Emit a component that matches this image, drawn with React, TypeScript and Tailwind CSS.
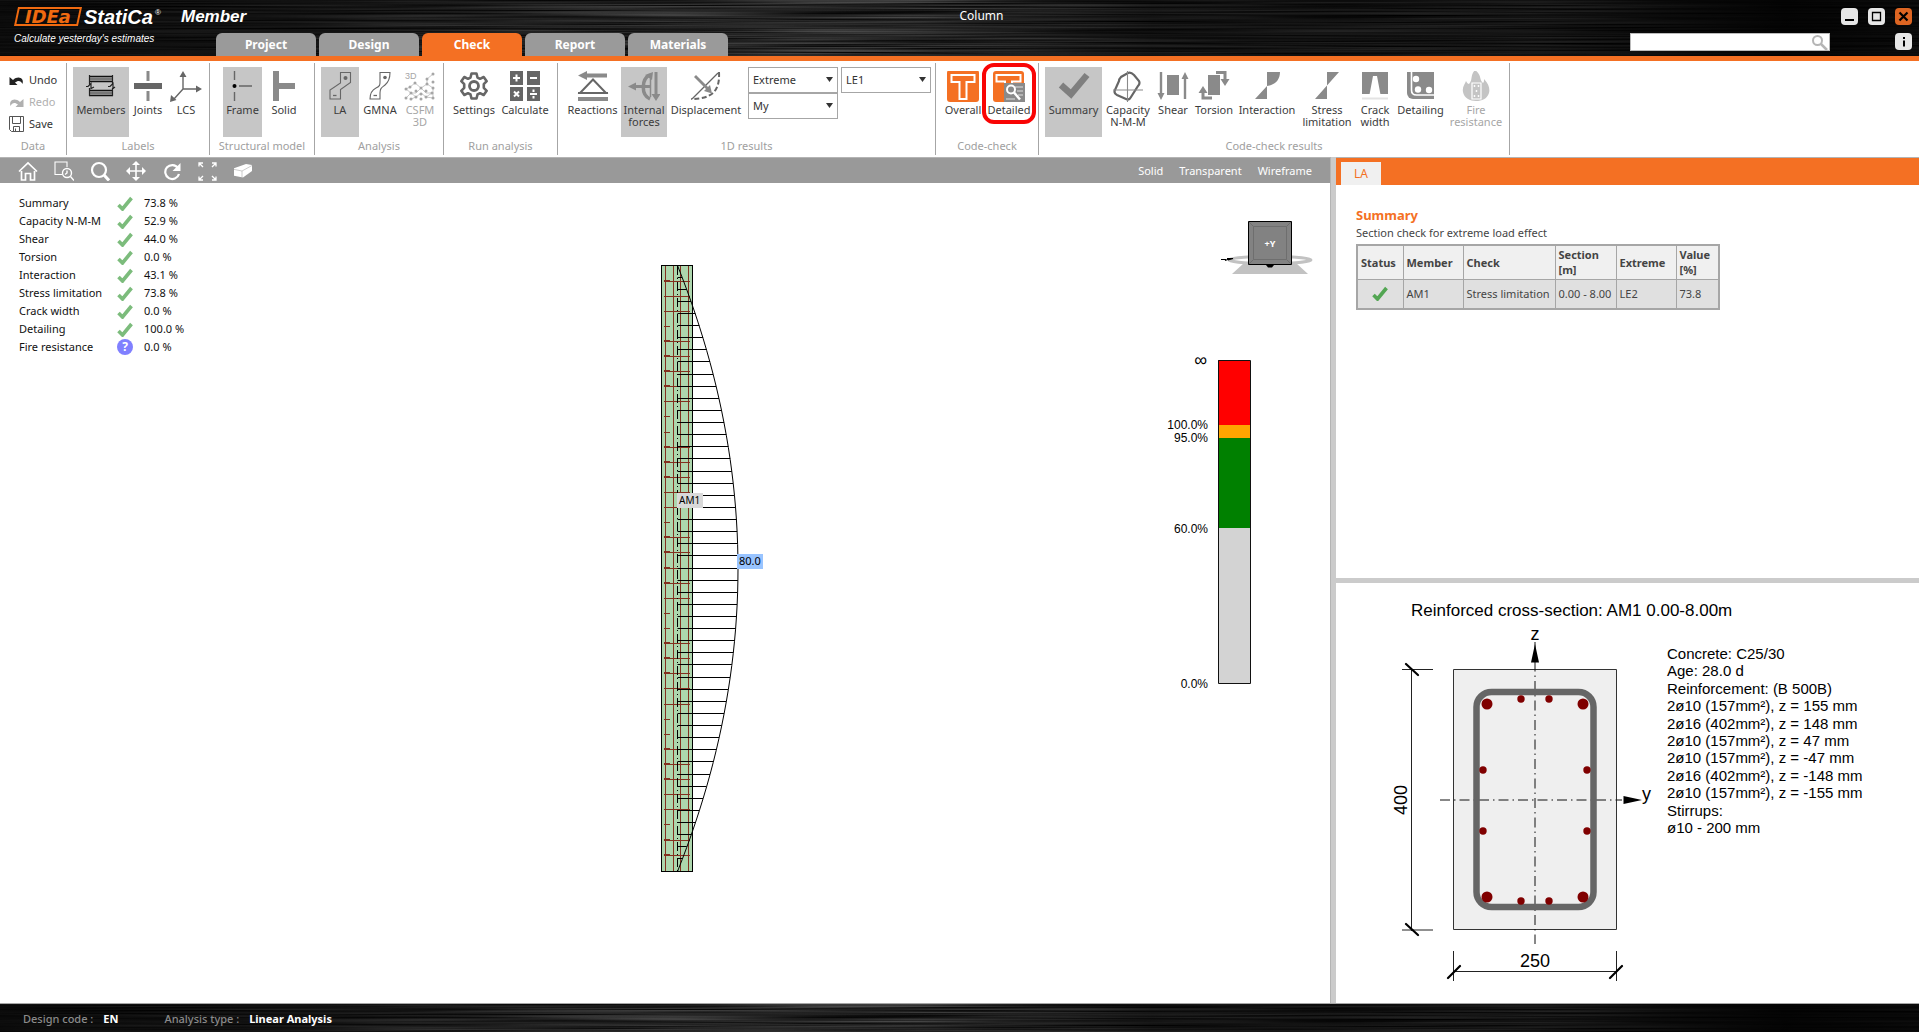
import { useId, useState, type ReactNode } from "react";

const G = "#8a8a8a";
const D = "#666666";

function BrushedMetal() {
  const id = useId();
  return (
    <svg className="absolute inset-0 h-full w-full" aria-hidden="true" preserveAspectRatio="none">
      <defs>
        <filter id={id + "f"} x="0" y="0" width="100%" height="100%" colorInterpolationFilters="sRGB">
          <feTurbulence type="fractalNoise" baseFrequency="0.004 0.6" numOctaves="2" seed="4" />
          <feColorMatrix values="0.5 0 0 0 -0.08  0.5 0 0 0 -0.08  0.5 0 0 0 -0.08  0 0 0 0 1" />
        </filter>
        <linearGradient id={id + "g"}>
          <stop offset="0" stopColor="#000" stopOpacity="0.75" />
          <stop offset="0.15" stopColor="#000" stopOpacity="0.6" />
          <stop offset="0.35" stopColor="#000" stopOpacity="0.15" />
          <stop offset="0.48" stopColor="#000" stopOpacity="0.15" />
          <stop offset="0.6" stopColor="#000" stopOpacity="0.6" />
          <stop offset="0.8" stopColor="#000" stopOpacity="0.55" />
          <stop offset="0.93" stopColor="#000" stopOpacity="0.92" />
          <stop offset="1" stopColor="#000" stopOpacity="0.8" />
        </linearGradient>
      </defs>
      <rect width="100%" height="100%" filter={`url(#${id}f)`} />
      <rect width="100%" height="100%" fill={`url(#${id}g)`} />
    </svg>
  );
}

function Ico({ children, w = 32 }: { children: ReactNode; w?: number }) {
  return (
    <svg width={w} height={33} viewBox={`0 0 ${w} 33`} fill="none" aria-hidden="true" className="shrink-0">
      {children}
    </svg>
  );
}

const icons = {
  members: (
    <Ico>
      <path d="M4 5.5h24M4 10.5h24M4 19.5h24M4 24.5h24" stroke="#111" strokeWidth="1.6" />
      <path d="M4 8h24M4 22h24" stroke="#777" strokeWidth="3" />
      <path d="M4.500 4v10M4.500 17v8M27.500 4v10M27.500 17v8M1 15.500h2l3-3v5l3-1.500M23 15.500h2l3-3v5l2-1.500" stroke="#222" strokeWidth="1.2" />
    </Ico>
  ),
  joints: (
    <Ico>
      <path d="M2 15h28" stroke={D} strokeWidth="6" />
      <path d="M16 0v10M16 20v10" stroke={G} strokeWidth="3" />
    </Ico>
  ),
  lcs: (
    <Ico>
      <path d="M13 4v14h14M13 18L4 28" stroke={D} strokeWidth="1.4" />
      <path d="M13 0l3.500 6h-7zM32 18l-6 3.500v-7zM0 31l1-7 5.500 5z" fill={D} />
    </Ico>
  ),
  frame: (
    <Ico>
      <path d="M7.500 0v9M7.500 21v9M12 15h13" stroke={D} strokeWidth="1.4" />
      <circle cx="7.500" cy="15" r="2" fill="#000" />
    </Ico>
  ),
  solid: (
    <Ico>
      <path d="M8 0v30" stroke={G} strokeWidth="6" />
      <path d="M9 15h18" stroke={G} strokeWidth="6" />
    </Ico>
  ),
  la: (
    <Ico>
      <path d="M16.500 1.500h10v10l-10 7v9.500h-10.500v-9l10.500-7z" stroke={D} strokeWidth="1.1" />
      <circle cx="21.500" cy="7" r="2" fill={D} />
      <path d="M9 24.500h3.500" stroke={D} strokeWidth="1.300" />
    </Ico>
  ),
  gmna: (
    <Ico>
      <path d="M16 1.500h10c0 7-2 10-5 12.500s-5 3-5 8v6h-10c0-6 2-9 6-11s4-3 4-6z" stroke={D} strokeWidth="1.1" />
      <circle cx="21" cy="6.500" r="1.800" fill={D} />
      <path d="M9.500 24.500h3.500" stroke={D} strokeWidth="1.300" />
    </Ico>
  ),
  csfm: (
    <Ico>
      <path
        d="M29 3l-6 5v5M11 12l-5 4-4 2 5 4-5 5M11 12l6 5 6-4 6 4M17 17l-5 5-5 0M17 17l5 5 6-0M7 22l5 4-5 2M17 22l5 4 6-4M17 22l-5 4M29 17v10l-7-1"
        stroke="#c9c9c9" strokeWidth="1"
      />
      <g fill="#a6a6a6">
        {[[29, 3], [23, 8], [29, 11], [11, 12], [23, 13], [6, 16], [17, 17], [29, 17], [2, 18], [12, 20], [22, 20], [7, 22], [17, 23], [28, 22], [2, 27], [12, 26], [22, 26], [7, 28], [17, 28], [29, 27]].map(([x, y]) => (
          <circle key={`${x}-${y}`} cx={x} cy={y} r="1.500" />
        ))}
      </g>
      <text x="1" y="8" fontSize="9" fill="#a6a6a6" className="font-['Liberation_Sans']">3D</text>
    </Ico>
  ),
  settings: (
    <Ico>
      <path
        d="M13.500 2.500h5l1 4 2.500 1.300 3.700-1.800 3 4.200-2.900 3v3.600l2.900 3-3 4.200-3.700-1.800-2.500 1.300-1 4h-5l-1-4-2.500-1.300-3.700 1.800-3-4.200 2.900-3v-3.600l-2.900-3 3-4.200 3.700 1.800 2.500-1.300z"
        stroke={D} strokeWidth="2.600" strokeLinejoin="round"
      />
      <circle cx="16" cy="15" r="4.500" stroke={D} strokeWidth="2.800" />
    </Ico>
  ),
  calculate: (
    <Ico>
      <path d="M1 0h13v14H1zM18 0h13v14H18zM1 16h13v14H1zM18 16h13v14H18z" fill={D} />
      <path d="M4 7h7M7.500 3.500v7M21 7h7M5 20.500l5 5M10 20.500l-5 5M21 23h7M24.500 18.500v2.500M24.500 25v2.500" stroke="#fff" strokeWidth="2" />
    </Ico>
  ),
  reactions: (
    <Ico>
      <path d="M1 4.500l9-4.500v2.500h20v4h-20v2.500zM1 26h30v4H1z" fill={G} />
      <path d="M16 8.500l13 13.500H3zM1 22h30" stroke={D} strokeWidth="2" />
    </Ico>
  ),
  internal: (
    <Ico>
      <path d="M5 15.500h17M28 1v24" stroke={G} strokeWidth="3" />
      <path d="M0 15.500l8-4v8zM28 30l-4.500-7h9zM25 1l-1 8-7-5z" fill={G} />
      <path d="M22 4c-9 4-9 20 0 24" stroke={G} strokeWidth="3.500" />
      <path d="M22.500 6v20" stroke={G} strokeWidth="1.500" />
    </Ico>
  ),
  displacement: (
    <Ico>
      <path d="M28 2L2 28" stroke={D} strokeWidth="1.300" />
      <path d="M29 1c1 18-6 27-28 27" stroke={D} strokeWidth="2" strokeDasharray="5 2.500" />
      <path d="M5 5l14 14" stroke={G} strokeWidth="2.800" />
      <path d="M22 22.500l-8-2.500 6-6z" fill={G} />
    </Ico>
  ),
  overall: (
    <Ico>
      <rect y="-1" width="32" height="32" rx="3" fill="#f47023" />
      <path d="M4.500 4h23v7h-8v17h-7v-17h-8z" stroke="#fff" strokeWidth="2" />
    </Ico>
  ),
  detailed: (
    <Ico>
      <rect width="31" height="31" rx="3" fill="#f47023" />
      <path d="M3.500 4h24v6.500h-8.500v8h-7v-8h-8.500z" stroke="#fff" strokeWidth="2" />
      <path d="M11 12h21v19H11z" fill={G} />
      <path d="M22 16h8M24 20h6M25 24h5M13 28h9" stroke="#ddd" strokeWidth="1.200" />
      <circle cx="18" cy="18.500" r="4" stroke="#fff" strokeWidth="2" />
      <path d="M21 21.500l6 7" stroke="#fff" strokeWidth="2.500" />
    </Ico>
  ),
  summary: (
    <Ico>
      <path d="M3 14l10 9L29 4" stroke="#7f7f7f" strokeWidth="6.500" />
    </Ico>
  ),
  capacity: (
    <Ico>
      <path d="M16 2c2-1 4 0 6 2l5 6c1 2 0 4-1 5l-7 11c-1 2-3 3-5 2l-9-4c-2-1-3-3-2-5L7 10c0-2 1-3 2-4z" stroke={D} strokeWidth="2.200" />
      <path d="M15.500 0v31M1 19h30" stroke={G} strokeWidth="1.100" />
    </Ico>
  ),
  shear: (
    <Ico>
      <path d="M10 4h12v20H10z" fill={G} />
      <path d="M4 1v23M28 6v22" stroke={G} strokeWidth="2.400" />
      <path d="M4 29l-3.500-7h7zM28 1l3.500 7h-7z" fill={G} />
    </Ico>
  ),
  torsion: (
    <Ico>
      <path d="M10 4h12v20H10z" fill={G} />
      <path d="M18 1.500h9v8M14 27H5v-5" stroke={G} strokeWidth="3" />
      <path d="M22.500 3v5M9.500 20v5" stroke="#fff" strokeWidth="1" />
      <path d="M27 15l-4.500-7h9zM5 15l4.500 7H.5z" fill={G} />
    </Ico>
  ),
  interaction: (
    <Ico>
      <path d="M4 28L16 15V1h13c0 8-5 13-13 14v13z" fill={G} />
    </Ico>
  ),
  stress: (
    <Ico>
      <path d="M4 28L16 14.500V1h12L16 14.500V28z" fill={G} />
    </Ico>
  ),
  crack: (
    <Ico>
      <path d="M3 1h26v22H3z" fill={G} />
      <path d="M10.500 23.500L14 5h4l3.500 18.500z" fill="#fff" />
      <path d="M3 27.500h26" stroke="#e3e3e3" strokeWidth="2" />
    </Ico>
  ),
  detailing: (
    <Ico>
      <path d="M2 1h27v27H8a6 6 0 0 1-6-6z" fill={G} />
      <path d="M6.500 1v18c0 3.500 1.500 5 5 5H29" stroke="#fff" strokeWidth="1.600" />
      <circle cx="11" cy="8" r="3.200" fill="#fff" />
      <circle cx="13" cy="18.500" r="3.200" fill="#fff" />
      <circle cx="24" cy="19" r="3.200" fill="#fff" />
    </Ico>
  ),
  fire: (
    <Ico>
      <path d="M15-1c7 5 4 10 8 13 1-1 1-2 1-4 5 5 6 10 5 14-2 6-7 8-13 8S4 27 3 21c-1-5 2-8 3-11 1 2 2 3 3 3 4-4 1-9 6-14z" fill="#c4c4c4" />
      <path d="M12 12h9v16h-9z" stroke="#fff" strokeWidth="1.200" />
      <path d="M14.500 15h0M18.500 15h0M16.500 20h0M14.500 25h0M18.500 25h0" stroke="#fff" strokeWidth="1.800" strokeLinecap="round" />
    </Ico>
  ),
};

type ToolProps = { icon: ReactNode; label: string; w: string; active?: boolean; off?: boolean; marked?: boolean };

function Tool({ icon, label, w, active, off, marked }: ToolProps) {
  return (
    <button
      type="button"
      disabled={off}
      aria-pressed={active}
      className={`relative flex h-[70px] flex-col items-center whitespace-pre pt-1 text-center text-[11px] leading-3 ${w} ${active ? "bg-[#c6c6c6]" : ""} ${off ? "text-[#a6a6a6]" : "text-[#3c3c3c]"}`}
    >
      {icon}
      <span>{label}</span>
      {marked && <span className="absolute -inset-x-1 -top-1 h-[61px] rounded-xl border-4 border-[#f90505]" />}
    </button>
  );
}

function Group({ title, w, pad, children }: { title: string; w: string; pad: string; children: ReactNode }) {
  return (
    <section aria-label={title} className={`mt-0.5 flex h-[92px] flex-col border-r border-[#a6a6a6] pt-1 ${w}`}>
      <div className={`flex h-[70px] ${pad}`}>{children}</div>
      <div className="pt-0.5 text-center text-[11px] leading-[14px] text-[#a0a0a0]">{title}</div>
    </section>
  );
}

function Combo({ label, value, options }: { label: string; value: string; options: string[] }) {
  return (
    <div className="relative h-[26px] w-[90px] border border-[#a6a6a6] bg-white">
      <select aria-label={label} defaultValue={value} className="block h-[23px] w-full appearance-none pl-1 text-[11px] leading-[23px] text-[#333] outline-none">
        {options.map((o) => <option key={o}>{o}</option>)}
      </select>
      <svg className="pointer-events-none absolute right-1 top-[9px]" width="7" height="5" aria-hidden="true"><path d="M0 0h7l-3.500 5z" fill="#333" /></svg>
    </div>
  );
}

function DataGroup() {
  const row = "flex h-[22px] items-center gap-1";
  return (
    <section aria-label="Data" className="mt-0.5 flex h-[92px] w-[67px] flex-col border-r border-[#a6a6a6] pt-1 text-[11px] text-[#333]">
      <div className="flex h-[70px] flex-col pl-2 pt-0.5">
        <button type="button" className={row}>
          <svg width="17" height="12" aria-hidden="true"><path d="M1.500 3v8h8l-2.500-2.500c3-2.500 6-2 7.500 1.500 2-5.500-4-9-9.500-4z" fill="#222" /></svg>Undo
        </button>
        <button type="button" disabled className={`${row} text-[#b0b0b0]`}>
          <svg width="17" height="12" aria-hidden="true"><path d="M15.500 3v8h-8l2.500-2.500c-3-2.500-6-2-7.500 1.500-2-5.500 4-9 9.500-4z" fill="#b0b0b0" /></svg>Redo
        </button>
        <button type="button" className={row}>
          <svg width="17" height="16" fill="none" stroke="#555" aria-hidden="true"><path d="M1.500.5h14v15h-12l-2-2zM4.500.500v7h8v-7M5.500 15v-4.500h6V15M7.500 12.500V15" /></svg>Save
        </button>
      </div>
      <div className="pt-0.5 text-center text-[11px] leading-[14px] text-[#a0a0a0]">Data</div>
    </section>
  );
}

const tabs = ["Project", "Design", "Check", "Report", "Materials"];

function Header() {
  const [tab, setTab] = useState("Check");
  const winBtn = "flex size-[17px] items-center justify-center rounded-sm";
  return (
    <header className="relative h-[61px] border-b-[5px] border-[#f47023] bg-black text-white">
      <BrushedMetal />
      <div className="relative flex h-14 justify-between">
        <div className="flex">
          <div className="flex w-[216px] flex-col pl-4 pt-1.5 font-['Liberation_Sans'] italic">
            <div className="flex h-[21px] items-center gap-1">
              <div className="flex h-[19px] w-16 -skew-x-12 items-center justify-center border-2 border-[#f06a10] font-['DejaVu_Sans'] text-[18px] font-bold not-italic leading-4 text-[#f06a10]">
                IDEa
              </div>
              <span className="text-[20px] font-bold">StatiCa</span>
              <sup className="-ml-0.5 text-[8px] not-italic">®</sup>
            </div>
            <p className="-ml-0.5 pt-1 text-[10px] leading-4">Calculate yesterday's estimates</p>
          </div>
          <div className="absolute left-[181px] top-1 font-['Liberation_Sans'] text-[17px] font-bold italic">Member</div>
          <nav className="mt-[33px] flex gap-[3px]">
            {tabs.map((t) => (
              <button
                key={t}
                type="button"
                onClick={() => setTab(t)}
                className={`h-[23px] w-[100px] rounded-t-md text-xs font-bold ${t === tab ? "bg-[#f47023]" : "bg-[#9a9a9a]"}`}
              >
                {t}
              </button>
            ))}
          </nav>
        </div>
        <h1 className="absolute left-1/2 top-1.5 text-xs leading-5">Column</h1>
        <div className="flex gap-[11px] pr-[7px]">
          <div className="mt-[33px] flex h-[18px] w-[200px] items-center border border-[#bbb] bg-white">
            <input type="search" aria-label="Search" className="w-full min-w-0 px-1 text-[11px] leading-4 text-black outline-none" />
            <svg width="18" height="17" fill="none" stroke="#b5b5b5" strokeWidth="2" className="shrink-0" aria-hidden="true"><circle cx="6.500" cy="6.500" r="4.500" /><path d="M10 10l6 6" strokeWidth="2.500" /></svg>
          </div>
          <div className="flex flex-col items-end gap-2 pt-2">
            <div className="flex gap-2.5">
              <button type="button" aria-label="Minimize" className={`${winBtn} bg-[#e6e6e6]`}><svg width="17" height="17"><path d="M4 12h9" stroke="#000" strokeWidth="2" /></svg></button>
              <button type="button" aria-label="Maximize" className={`${winBtn} bg-[#e6e6e6]`}><svg width="17" height="17"><path d="M4.500 4.500h8v8h-8z" fill="none" stroke="#000" strokeWidth="1.300" /></svg></button>
              <button type="button" aria-label="Close" className={`${winBtn} bg-[#dd6522]`}><svg width="17" height="17"><path d="M4.500 4.500l8 8M12.500 4.500l-8 8" stroke="#000" strokeWidth="2.200" /></svg></button>
            </div>
            <button type="button" aria-label="Information" className={`${winBtn} bg-[#e6e6e6]`}><svg width="17" height="17"><path d="M9 4v2M9 7.500v6" stroke="#000" strokeWidth="2" /></svg></button>
          </div>
        </div>
      </div>
    </header>
  );
}

function Ribbon() {
  return (
    <div className="flex h-24 bg-white">
      <DataGroup />
      <Group title="Labels" w="w-[143px]" pad="pl-1.5">
        <Tool icon={icons.members} label="Members" w="w-14" active />
        <Tool icon={icons.joints} label="Joints" w="w-[38px]" />
        <Tool icon={icons.lcs} label="LCS" w="w-[38px]" />
      </Group>
      <Group title="Structural model" w="w-[105px]" pad="pl-[13px]">
        <Tool icon={icons.frame} label="Frame" w="w-[39px]" active />
        <Tool icon={icons.solid} label="Solid" w="w-[44px]" />
      </Group>
      <Group title="Analysis" w="w-[129px]" pad="pl-1.5">
        <Tool icon={icons.la} label="LA" w="w-[38px]" active />
        <Tool icon={icons.gmna} label="GMNA" w="w-[42px]" />
        <Tool icon={icons.csfm} label={"CSFM\n3D"} w="w-[38px]" off />
      </Group>
      <Group title="Run analysis" w="w-[114px]" pad="pl-1.5">
        <Tool icon={icons.settings} label="Settings" w="w-12" />
        <Tool icon={icons.calculate} label="Calculate" w="w-[54px]" />
      </Group>
      <Group title="1D results" w="w-[378px]" pad="pl-1.5">
        <Tool icon={icons.reactions} label="Reactions" w="w-[57px]" />
        <Tool icon={icons.internal} label={"Internal\nforces"} w="w-[46px]" active />
        <Tool icon={icons.displacement} label="Displacement" w="w-[78px]" />
        <div className="flex items-start gap-[3px] pl-[3px]">
          <div className="flex flex-col">
            <Combo label="Result type" value="Extreme" options={["Extreme", "All"]} />
            <Combo label="Force component" value="My" options={["My", "Mz", "N"]} />
          </div>
          <Combo label="Load effect" value="LE1" options={["LE1", "LE2"]} />
        </div>
      </Group>
      <Group title="Code-check" w="w-[103px]" pad="pl-1">
        <Tool icon={icons.overall} label="Overall" w="w-[46px]" />
        <Tool icon={icons.detailed} label="Detailed" w="w-[46px]" marked />
      </Group>
      <Group title="Code-check results" w="w-[471px]" pad="pl-1.5">
        <Tool icon={icons.summary} label="Summary" w="w-[57px]" active />
        <Tool icon={icons.capacity} label={"Capacity\nN-M-M"} w="w-[52px]" />
        <Tool icon={icons.shear} label="Shear" w="w-[38px]" />
        <Tool icon={icons.torsion} label="Torsion" w="w-[44px]" />
        <Tool icon={icons.interaction} label="Interaction" w="w-[62px]" />
        <Tool icon={icons.stress} label={"Stress\nlimitation"} w="w-[58px]" />
        <Tool icon={icons.crack} label={"Crack\nwidth"} w="w-[38px]" />
        <Tool icon={icons.detailing} label="Detailing" w="w-[53px]" />
        <Tool icon={icons.fire} label={"Fire\nresistance"} w="w-[58px]" off />
      </Group>
    </div>
  );
}

function ViewToolbar() {
  const s = { width: 20, height: 20, fill: "none", stroke: "#fff", strokeWidth: 2, "aria-hidden": true } as const;
  return (
    <div className="flex h-[26px] items-center justify-between border-t border-[#b4b4b4] bg-[#999] px-[18px]">
      <div className="flex gap-4">
        <button type="button" aria-label="Home"><svg {...s}><path d="M1 10.500L10 2l9 8.500M3.500 10v9h4v-6.500h5V19h4v-9" strokeWidth="1.700" /></svg></button>
        <button type="button" aria-label="Zoom window"><svg {...s}><path d="M8 13.500H1V1h12v5" strokeWidth="1.100" /><circle cx="13" cy="12" r="4.500" strokeWidth="1.400" /><path d="M16.500 15.500l3.500 4M13 9.500V12l-2 1.500" strokeWidth="1.400" /></svg></button>
        <button type="button" aria-label="Zoom"><svg {...s}><circle cx="9" cy="9" r="7" strokeWidth="2.200" /><path d="M14 14l5 5.500" strokeWidth="3" /></svg></button>
        <button type="button" aria-label="Pan"><svg {...s}><path d="M10 2v16M2 10h16" strokeWidth="1.600" /><path d="M10 0l4 4H6zM10 20l4-4H6zM0 10l4-4v8zM20 10l-4-4v8z" fill="#fff" stroke="none" /></svg></button>
        <button type="button" aria-label="Rotate"><svg {...s}><path d="M16 7a7 7 0 1 0 1 6" strokeWidth="2.200" /><path d="M18.500 2v8h-8z" fill="#fff" stroke="none" /></svg></button>
        <button type="button" aria-label="Fit to window"><svg {...s}><path d="M1 5.500V2h4M1 2l4 4M14 2h4v3.500M18 2l-4 4M1 15.500V19h4M1 19l4-4M14 19h4v-3.500M18 19l-4-4" strokeWidth="1.300" /></svg></button>
        <button type="button" aria-label="Perspective"><svg {...s} viewBox="2 1 20 20"><path d="M0 9l14-5 6 1v6l-9 6.500-11-2z" fill="#fff" stroke="none" /><path d="M0 9l10 2v7M10 11l10-5.500" stroke="#aaa" strokeWidth=".6" /></svg></button>
      </div>
      <div className="flex gap-4 text-[11px] leading-4 text-white">
        <button type="button">Solid</button>
        <button type="button">Transparent</button>
        <button type="button">Wireframe</button>
      </div>
    </div>
  );
}

const results: [string, string][] = [
  ["Summary", "73.8 %"], ["Capacity N-M-M", "52.9 %"], ["Shear", "44.0 %"], ["Torsion", "0.0 %"], ["Interaction", "43.1 %"],
  ["Stress limitation", "73.8 %"], ["Crack width", "0.0 %"], ["Detailing", "100.0 %"], ["Fire resistance", "0.0 %"],
];

function Check({ color }: { color: string }) {
  return <svg width="16" height="15" fill="none" aria-label="Passed" role="img"><path d="M1.500 9l4 4L14.500 2" stroke={color} strokeWidth="3.600" /></svg>;
}

function ResultList() {
  return (
    <table className="ml-[19px] mt-[11px] text-left text-[11px] leading-[18px] text-[#111]">
      <tbody>
        {results.map(([name, value]) => (
          <tr key={name} className="h-[18px]">
            <th scope="row" className="w-[98px] whitespace-nowrap p-0 font-normal">{name}</th>
            <td className="w-[27px] p-0">
              {name === "Fire resistance" ? (
                <span className="flex size-4 items-center justify-center rounded-full bg-[#8080ff] text-xs font-bold leading-4 text-white">?</span>
              ) : (
                <Check color="#7cbc7c" />
              )}
            </td>
            <td className="whitespace-nowrap p-0">{value}</td>
          </tr>
        ))}
      </tbody>
    </table>
  );
}

const shortBars = [3, 9, 10, 16, 22, 23, 29, 30, 36];
const ticks = [0, 4, 5, 6, 7, 11, 12, 13, 17, 18, 19, 20, 24, 25, 26, 31, 32, 33, 37, 38];
const moment = (t: number) => 112.5 + 60.500 * 4 * t * (1 - t);

function MemberDiagram() {
  const curve = Array.from({ length: 51 }, (_, i) => `${moment(i / 50)},${0.5 + (i * 606) / 50}`).join(" ");
  return (
    <svg width="200" height="608" className="mt-[82px]" role="img" aria-label="Bending moment My on member AM1" fill="none">
      <rect x="96.500" y=".5" width="31" height="606" fill="#add6ad" />
      <path d="M100.500 1v606M108.500 1v606M115.500 1v606M123.500 1v606" stroke="#83301f" />
      {Array.from({ length: 39 }, (_, i) => {
        const y = Math.round(15.5 + i * 15.110) + 0.5;
        return (
          <g key={i} stroke="#83301f">
            <path d={shortBars.includes(i) ? `M99 ${y}h6` : `M99 ${y}h26`} />
            {ticks.includes(i) && <path d={`M99 ${y - 1}h6`} />}
          </g>
        );
      })}
      <path d="M112.500 1v606" stroke="#000" strokeDasharray="9 3 1 3" />
      {Array.from({ length: 49 }, (_, i) => {
        const t = (i + 1) / 50;
        return <path key={i} d={`M112.500 ${Math.floor(t * 606) + 0.5}H${moment(t)}`} stroke="#000" />;
      })}
      <polyline points={curve} stroke="#000" />
      <rect x="96.500" y=".5" width="31" height="606" stroke="#000" />
      <rect x="112" y="228" width="26" height="15" fill="#d9d9d9" />
      <text x="114" y="239" fontSize="10" fill="#000">AM1</text>
      <rect x="172" y="289" width="26" height="15" fill="#99c4ff" />
      <text x="174" y="300" fontSize="11" fill="#000">80.0</text>
    </svg>
  );
}

function OrientationCube() {
  return (
    <svg width="96" height="56" className="mr-3.5" role="img" aria-label="View orientation +Y" fill="none">
      <ellipse cx="50" cy="40" rx="41" ry="3.500" stroke="#c2c2c2" strokeWidth="3" />
      <path d="M24 43h52l12 11H12z" fill="#c2c2c2" />
      <path d="M1 39.500h5M7 38.500h6l-5 1.500M5 40.500l4-1.500" stroke="#000" strokeWidth="1.200" />
      <path d="M46 45h8l-2 2.500h-4z" fill="#000" />
      <path d="M28.500 1.500h43v43h-43z" fill="#828282" stroke="#000" />
      <path d="M33.500 6.500h33v33h-33zM29 2l4.500 4.500M71 2l-4.500 4.500M29 44l4.500-4.500M71 44l-4.500-4.500" stroke="#6e6e6e" />
      <text x="50" y="27" textAnchor="middle" fontSize="9" fontWeight="bold" fill="#fff">+Y</text>
    </svg>
  );
}

function Legend() {
  return (
    <svg width="96" height="336" className="mr-[75px] mt-[78px] font-['Liberation_Sans']" role="img" aria-label="Utilisation scale" fontSize="12" textAnchor="end">
      <path d="M59 6h32v65H59z" fill="#f00" />
      <path d="M59 71h32v13H59z" fill="#ffa500" />
      <path d="M59 84h32v90H59z" fill="#008000" />
      <path d="M59 174h32v155H59z" fill="#d3d3d3" />
      <path d="M59.500 6.500h32v323h-32z" fill="none" stroke="#111" />
      <text x="48" y="12" fontSize="18">∞</text>
      <text x="49" y="75">100.0%</text>
      <text x="49" y="88">95.0%</text>
      <text x="49" y="179">60.0%</text>
      <text x="49" y="334">0.0%</text>
    </svg>
  );
}

function ReportPanel() {
  const cell = "border border-[#a6a6a6] px-[3px]";
  return (
    <section className="h-[421px] border-t border-[#b4b4b4]">
      <div className="flex h-[27px] items-end bg-[#f47023] pl-[5px]">
        <button type="button" className="h-[23px] w-10 bg-[#f0f0f0] text-xs text-[#f47023]">LA</button>
      </div>
      <div className="px-5 pt-[21px] text-[11px] text-[#444]">
        <h2 className="text-[13px] font-bold leading-[18px] text-[#f47023]">Summary</h2>
        <p className="leading-[18px]">Section check for extreme load effect</p>
        <table className="mt-0.5 border-collapse border-2 border-[#a6a6a6] text-left">
          <thead>
            <tr className="h-[34px] bg-[#f0f0f0] leading-[15px]">
              <th className={`w-[46px] ${cell}`}>Status</th>
              <th className={`w-[60px] ${cell}`}>Member</th>
              <th className={`w-[92px] ${cell}`}>Check</th>
              <th className={`w-[61px] ${cell}`}>Section [m]</th>
              <th className={`w-[60px] ${cell}`}>Extreme</th>
              <th className={`w-[43px] ${cell}`}>Value [%]</th>
            </tr>
          </thead>
          <tbody>
            <tr className="h-[30px] whitespace-nowrap bg-[#e0e0e0]">
              <td className={cell}><div className="flex justify-center"><Check color="#53a653" /></div></td>
              <td className={cell}>AM1</td>
              <td className={cell}>Stress limitation</td>
              <td className={cell}>0.00 - 8.00</td>
              <td className={cell}>LE2</td>
              <td className={cell}>73.8</td>
            </tr>
          </tbody>
        </table>
      </div>
    </section>
  );
}

const rebars: [number, number, number][] = [
  [96, 78, 5.500], [192, 78, 5.500], [96, 271, 5.500], [192, 271, 5.500],
  [130, 73, 3.700], [158, 73, 3.700], [130, 275, 3.700], [158, 275, 3.700],
  [92, 144, 3.700], [196, 144, 3.700], [92, 205, 3.700], [196, 205, 3.700],
];

const sectionNotes = [
  "Concrete: C25/30", "Age: 28.0 d", "Reinforcement: (B 500B)", "2ø10 (157mm²), z = 155 mm", "2ø16 (402mm²), z = 148 mm",
  "2ø10 (157mm²), z = 47 mm", "2ø10 (157mm²), z = -47 mm", "2ø16 (402mm²), z = -148 mm", "2ø10 (157mm²), z = -155 mm",
  "Stirrups:", "ø10 - 200 mm",
];

function CrossSection() {
  return (
    <section className="flex-1 border-t-[5px] border-[#cbcbcb] bg-white pl-[55px] pt-[18px] font-['Liberation_Sans'] text-black">
      <h2 className="pl-[20px] text-[17px] leading-5">Reinforced cross-section: AM1 0.00-8.00m</h2>
      <div className="flex">
        <svg width="270" height="370" viewBox="0 -5 270 370" className="shrink-0" role="img" aria-label="Cross-section 250 by 400" fill="none" fontSize="18">
          <path d="M62.500 43.500h163v260h-163z" fill="#efefef" stroke="#333" />
          <path d="M144 16v302" stroke="#111" strokeDasharray="10 4 1.500 4" />
          <path d="M49 174h182" stroke="#111" strokeDasharray="10 4 1.500 4" />
          <rect x="85.500" y="66" width="117" height="215" rx="15" stroke="#666" strokeWidth="6.500" />
          {rebars.map(([x, y, r]) => <circle key={`${x}-${y}`} cx={x} cy={y} r={r} fill="#800000" />)}
          <path d="M144 18l4 18.500h-8zM251 174l-18.500 4v-8z" fill="#000" />
          <path d="M20.500 42v263M11 43.500h31M11 304h31M62.500 325v30M225.500 325v30M62 345.500h164" stroke="#222" />
          <path d="M15 38l12 11M15 298l12 11M57 352l12-12M219 352l12-12" stroke="#000" strokeWidth="2.200" strokeLinecap="round" />
          <text x="144" y="14" textAnchor="middle" fill="#000">z</text>
          <text x="251" y="174" fill="#000">y</text>
          <text x="144" y="341" textAnchor="middle" fill="#000">250</text>
          <text transform="translate(16 174) rotate(-90)" textAnchor="middle" fill="#000">400</text>
        </svg>
        <ul className="pl-1.5 pt-6 text-[15px] leading-[1.16]">
          {sectionNotes.map((n) => <li key={n} className="whitespace-nowrap">{n}</li>)}
        </ul>
      </div>
    </section>
  );
}

export default function App() {
  return (
    <div className="flex min-h-screen flex-col bg-white font-['Noto_Sans',sans-serif]">
      <Header />
      <Ribbon />
      <main className="flex flex-1">
        <section className="flex min-w-0 flex-1 flex-col">
          <ViewToolbar />
          <div className="grid flex-1 grid-cols-[1fr_200px_1fr] items-start">
            <div><ResultList /></div>
            <MemberDiagram />
            <div className="flex flex-col items-end pt-[37px]">
              <OrientationCube />
              <Legend />
            </div>
          </div>
        </section>
        <div className="w-1.5 border-l border-[#b4b4b4] bg-[#cbcbcb]" />
        <aside className="flex w-[583px] flex-col">
          <ReportPanel />
          <CrossSection />
        </aside>
      </main>
      <footer className="relative h-[29px] border-t border-[#a6a6a6] bg-black text-[11px]">
        <BrushedMetal />
        <dl className="relative flex h-full items-center gap-2.5 pl-[23px] pt-0.5 font-bold">
          <dt className="font-medium text-[#8a8a8a]">Design code :</dt>
          <dd className="mr-9 text-white">EN</dd>
          <dt className="font-medium text-[#8a8a8a]">Analysis type :</dt>
          <dd className="text-white">Linear Analysis</dd>
        </dl>
      </footer>
    </div>
  );
}
